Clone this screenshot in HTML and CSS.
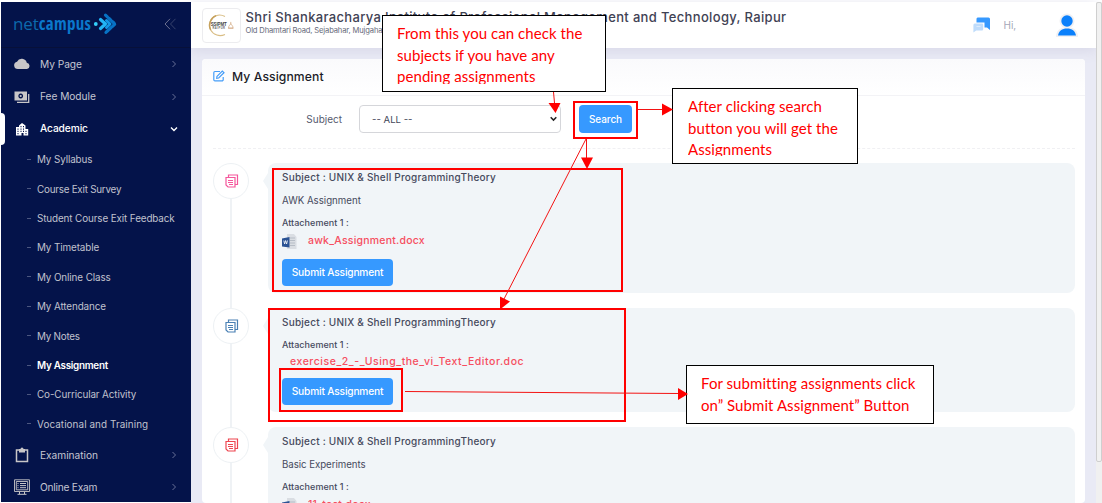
FILE: index.html
```html
<!DOCTYPE html>
<html lang="en">
<head>
<meta charset="utf-8">
<title>My Assignment</title>
<link rel="stylesheet" href="styles.css">
</head>
<body>
<div class="app">
  <nav class="sidebar">
    <div class="brand">
      <span class="brand-name">net<b>campus</b></span>
      <svg class="brand-mark" width="26" height="24" viewBox="0 0 26 24"><g fill="none" stroke-linecap="round" stroke-linejoin="round"><path d="M12.500 3.200L22 12l-9.500 8.800" stroke="#0872c4" stroke-width="3.200" stroke-dasharray="2.500 2"/><path d="M12.500 3.200L22 12l-9.500 8.800" stroke="#0872c4" stroke-width="2"/><path d="M7.500 7.500l5 4.500-5 4.500" stroke="#22b5f5" stroke-width="3.200"/><path d="M13.500 8.500L17 12l-3.500 3.500" stroke="#1297e6" stroke-width="3"/></g><circle cx="2.800" cy="12" r="1.900" fill="#35d0fa"/></svg>
      <svg class="collapse" width="13" height="12" viewBox="0 0 13 12" fill="none" stroke-width="1"><path d="M6 .8L1 6l5 5.200" stroke="#6c7090"/><path d="M11.500.8L6.500 6l5 5.200" stroke="#39446d"/></svg>
    </div>
    <a class="item"><svg class="ico" viewBox="0 0 16 16"><path fill="#c8c6c8" d="M3.800 13A3.700 3.700 0 0 1 3 5.700 5.300 5.300 0 0 1 12.800 6.700 3.200 3.200 0 0 1 13 13z"/></svg><span>My Page</span><svg class="chev" viewBox="0 0 8 8"><path d="M2.500 1l3 3-3 3"/></svg></a>
    <a class="item"><svg class="ico" viewBox="0 0 16 16"><path fill="#c8c6c8" fill-rule="evenodd" d="M.5 2.500h12.500v9H.5zM6.700 4.600a2.400 2.400 0 1 0 .01 0z"/><circle cx="6.700" cy="7" r="1.100" fill="#c8c6c8"/><path d="M3 13.300h11.700V5" fill="none" stroke="#c8c6c8" stroke-width="1.300"/></svg><span>Fee Module</span><svg class="chev" viewBox="0 0 8 8"><path d="M2.500 1l3 3-3 3"/></svg></a>
    <a class="item open"><svg class="ico" viewBox="0 0 16 16"><path fill="#fff" fill-rule="evenodd" d="M2 6h3V4.500L8 2l3.500 2.500V8h2.700v6.500H9.500V12h-2v2.500H2zM3.500 7.500v1.200h1V7.500zm0 2.300V11h1V9.800zm0 2.200v1.200h1V12zM6.500 5v1.200h1V5zm2.500 0v1.200h1V5zM6.500 7.500v1.200h1V7.500zm2.500 0v1.200h1V7.500zM6.500 9.800V11h1V9.800zm2.500 0V11h1V9.800zm2.500 0V11h1V9.800zm0 2.200v1.200h1V12z"/></svg><span>Academic</span><svg class="chev" viewBox="0 0 8 8"><path d="M1 2.500l3 3 3-3"/></svg></a>
    <a class="sub"><span>My Syllabus</span></a>
    <a class="sub tight"><span>Course Exit Survey</span></a>
    <a class="sub"><span>Student Course Exit Feedback</span></a>
    <a class="sub"><span>My Timetable</span></a>
    <a class="sub"><span>My Online Class</span></a>
    <a class="sub"><span>My Attendance</span></a>
    <a class="sub tight"><span>My Notes</span></a>
    <a class="sub current"><span>My Assignment</span></a>
    <a class="sub"><span>Co-Curricular Activity</span></a>
    <a class="sub loose"><span>Vocational and Training</span></a>
    <a class="item"><svg class="ico" viewBox="0 0 16 16"><path d="M2.500 3h11v11.500h-11z" fill="none" stroke="#c8c6c8" stroke-width="1.500"/><path d="M5 5.500V2h1.500a1.500 1.500 0 0 1 3 0H11v3.500z" fill="#c8c6c8"/></svg><span>Examination</span><svg class="chev" viewBox="0 0 8 8"><path d="M2.500 1l3 3-3 3"/></svg></a>
    <a class="item"><svg class="ico" viewBox="0 0 16 16" fill="none" stroke="#c8c6c8"><path d="M.5.800h15v11.700H.500zM2.300 2.500h11.400v8.300H2.300z" stroke-width=".9"/><path d="M3.500 4.500h1M6 4.500h6M3.500 6.600h1M6 6.600h6M3.500 8.700h1M6 8.700h6" stroke-width="1"/><path d="M5.500 13v2M10.500 13v2M3.500 15.300h9" stroke-width="1"/></svg><span class="online">Online Exam</span><svg class="chev" viewBox="0 0 8 8"><path d="M2.500 1l3 3-3 3"/></svg></a>
  </nav>

  <div class="main">
    <header class="topbar">
      <div class="crest"><svg width="28" height="28" viewBox="0 0 28 28"><path d="M19 4A12 12 0 0 0 9 3A11.500 11.500 0 0 0 3 19A12 12 0 0 0 19 24" fill="none" stroke="#d9bd84" stroke-width="1.200"/><path d="M9 3A11.500 11.500 0 0 0 3 19" fill="none" stroke="#c6a15c" stroke-width="1.600"/><text x="3" y="14.500" class="crest-name" textLength="18">SSIPMT</text><text x="5" y="18" class="crest-city" textLength="14">RAIPUR</text><path d="M25.500 10v2.500m-2.500 4.500c0-3 1.500-3 2.500-5 1 2 2.500 2 2.500 5zm-.5 0h6" fill="none" stroke="#d7b28d" stroke-width="1"/></svg></div>
      <div class="school">
        <div class="school-name">Shri Shankaracharya Institute of Professional Management and Technology, Raipur</div>
        <div class="school-addr">Old Dhamtari Road, Sejabahar, Mujgahan</div>
      </div>
      <svg class="chat" width="18" height="16" viewBox="0 0 18 16"><path d="M4.500.5h11a1.500 1.500 0 0 1 1.500 1.500v11l-3-2.500h-2.500V5.500H3.500v-4z" fill="#3699ff"/><path d="M2 6.500h7a1.200 1.200 0 0 1 1.200 1.200v4.600A1.200 1.200 0 0 1 9 13.500H3.200L.4 15.500V8A1.500 1.500 0 0 1 2 6.500z" fill="#bfdcfb"/><path d="M3.500 9.500h4" stroke="#dcecfd"/></svg>
      <span class="hi">Hi,</span>
      <svg class="user" width="24" height="25" viewBox="0 0 24 25"><circle cx="12" cy="8" r="7.500" fill="#f0f0f3"/><path d="M1 24c0-6 4-9.500 8-9.500h6c4 0 8 3.500 8 9.500z" fill="#f0f0f3"/><circle cx="12" cy="8" r="5.700" fill="#0b80fb"/><path d="M3 22.500c.8-4.500 4-7 9-7s8.200 2.500 9 7z" fill="#0b80fb"/></svg>
    </header>

    <section class="card">
      <div class="card-head">
        <svg width="12" height="12" viewBox="0 0 12 12" fill="none" stroke="#459df8" stroke-width="1.200"><path d="M7 1.500H2A1.200 1.200 0 0 0 .8 2.700v7A1.200 1.200 0 0 0 2 10.900h7a1.200 1.200 0 0 0 1.200-1.200V7"/><path d="M4 6.300L9.300 1l1.700 1.700-5.300 5.300L3.700 8.300z"/></svg>
        <h1>My Assignment</h1>
      </div>
      <div class="filter">
        <label>Subject</label>
        <div class="select"><span>-- ALL --</span><svg width="7" height="6" viewBox="0 0 7 6"><path d="M.7 1.200l2.800 2.900 2.800-2.900" fill="none" stroke="#222" stroke-width="1.500"/></svg></div>
        <button class="btn search">Search</button>
      </div>
      <div class="timeline">
        <div class="entry pink">
          <div class="dot"><svg viewBox="0 0 14 14"><path d="M3.500 3V1h9v9.500h-2M1 3.500h9v9.500H3L1 11zM3 6.500h5M3 8.500h5M4 10.500h4"/></svg></div>
          <div class="panel tall">
            <h2>Subject : UNIX &amp; Shell ProgrammingTheory</h2>
            <p>AWK Assignment</p>
            <h3>Attachement 1 :</h3>
            <div class="file withicon"><svg width="15" height="15" viewBox="0 0 15 15"><path d="M5 0h7l2.500 3v12H5z" fill="#dadee3"/><path d="M8 4h5M8 6.500h5M8 9h5M8 11.500h5" stroke="#b6bdc6"/><path d="M0 4.500L7.500 3v10.500L0 12.500z" fill="#2b5394"/><path d="M1.800 6.500l.8 3.500 1-3.500 1 3.500.9-3.500" fill="none" stroke="#fff" stroke-width=".8"/></svg><a>awk_Assignment.docx</a></div>
            <button class="btn">Submit Assignment</button>
          </div>
        </div>
        <div class="entry blue">
          <div class="dot"><svg viewBox="0 0 14 14"><path d="M3.500 3V1h9v9.500h-2M1 3.500h9v9.500H3L1 11zM3 6.500h5M3 8.500h5M4 10.500h4"/></svg></div>
          <div class="panel short">
            <h2>Subject : UNIX &amp; Shell ProgrammingTheory</h2>
            <h3>Attachement 1 :</h3>
            <div class="file"><a class="long">exercise_2_-_Using_the_vi_Text_Editor.doc</a></div>
            <button class="btn">Submit Assignment</button>
          </div>
        </div>
        <div class="entry red">
          <div class="dot"><svg viewBox="0 0 14 14"><path d="M3.500 3V1h9v9.500h-2M1 3.500h9v9.500H3L1 11zM3 6.500h5M3 8.500h5M4 10.500h4"/></svg></div>
          <div class="panel tall">
            <h2>Subject : UNIX &amp; Shell ProgrammingTheory</h2>
            <p class="basic">Basic Experiments</p>
            <h3>Attachement 1 :</h3>
            <div class="file withicon"><svg width="15" height="15" viewBox="0 0 15 15"><path d="M5 0h7l2.500 3v12H5z" fill="#dadee3"/><path d="M8 4h5M8 6.500h5" stroke="#b6bdc6"/><path d="M0 4.500L7.500 3v10.500L0 12.500z" fill="#2b5394"/></svg><a class="last">11_test.docx</a></div>
          </div>
        </div>
      </div>
    </section>
  </div>
  <div class="scroll"><div class="thumb"></div></div>
</div>

<div class="callout c-subjects"><div>From this you can check the<br>subjects if you have any<br>pending assignments</div></div>
<div class="callout c-search"><div>After clicking search<br>button you will get the<br>Assignments</div></div>
<div class="callout c-submit"><div>For submitting assignments click<br>on” Submit Assignment” Button</div></div>
<svg class="marks" width="1102" height="503" viewBox="0 0 1102 503">
  <g fill="none" stroke="#f00" stroke-width="2">
    <rect x="574" y="102" width="63" height="36"/>
    <rect x="273" y="169" width="349" height="122"/>
    <rect x="269" y="309" width="356" height="112"/>
    <rect x="280" y="369" width="122" height="42"/>
    <rect x="27" y="357" width="98" height="18"/>
  </g>
  <g fill="none" stroke="#f31313" stroke-width="1">
    <path d="M553.500 92l1 11M638 109.500h27M586.500 139v20M586 139l-82 160M405 391.500l273 2"/>
    <path d="M115.500 309v38" stroke="#d00c1c"/>
  </g>
  <g fill="#f00"><path d="M548.500 103h12l-5 10zM662 103.500v12l11-6zM581 157.500h12l-6 11.500zM500 296.500l10 5-10 8zM678 388v12l10-6zM109 346.500h12l-6 11z"/></g>
</svg>
</body>
</html>
```
FILE: styles.css
```css
* { box-sizing: border-box; }
body { margin: 0; width: 1102px; height: 503px; overflow: hidden; position: relative; background: #fff; font-family: Inter, "Open Sans", sans-serif; }
h1, h2, h3, p { margin: 0; font-weight: 500; }
.app { display: flex; height: 503px; padding: 2px 0 0 1px; }

.sidebar { width: 190px; height: 500px; background: #04134a; flex: none; white-space: nowrap; overflow: hidden; position: relative; z-index: 1; }
.brand { height: 46.200px; display: flex; align-items: center; padding: 0 14px 2px 12px; border-bottom: 1px solid #071039; }
.brand-name { font: 17px/20px "Open Sans", sans-serif; letter-spacing: -.1px; color: #0c69ad; width: 80px; flex: none; }
.brand-name b { font-weight: 700; font-stretch: 87%; letter-spacing: .3px; color: #0a78cc; }
.brand-mark { flex: none; }
.collapse { margin-left: auto; }
.item { height: 32.300px; display: flex; align-items: center; padding: 0 13px; font-size: 10.200px; color: #c5c6d2; letter-spacing: -.05px; }
.item span { padding-bottom: 1px; }
.item .online { letter-spacing: -.25px; }
.ico { width: 16px; height: 16px; margin-right: 10px; }
.chev { width: 8px; height: 8px; margin-left: auto; fill: none; stroke: #687097; stroke-width: 1; }
.item.open { color: #fff; font-weight: 500; position: relative; letter-spacing: -.1px; }
.item.open::before { content: ""; position: absolute; left: -1px; top: 0; width: 5px; height: 32px; border-radius: 0 4px 4px 0; background: #fff; }
.open .chev { stroke: #fff; stroke-width: 1.400; }
.sub { height: 29.400px; display: flex; align-items: center; padding: 0 0 1px 36px; font-size: 9.900px; color: #c0c2ce; letter-spacing: -.12px; }
.sub::before { content: ""; width: 4px; height: 1px; margin-left: -10px; margin-right: 6px; background: #4c5780; }
.sub.tight { letter-spacing: -.25px; }
.sub.loose { letter-spacing: .08px; }
.sub.current { color: #fff; font-weight: 600; letter-spacing: -.28px; }

.main { width: 905px; background: #e9eaf5; }
.topbar { height: 46px; background: #fff; display: flex; align-items: center; padding-left: 11px; white-space: nowrap; box-shadow: 0 3px 12px #d8d8e8; }
.crest { width: 39px; height: 35px; border: 1px solid #ececef; border-radius: 4px; display: flex; align-items: center; justify-content: center; margin-right: 4.500px; flex: none; }
.crest svg { overflow: visible; margin-right: 3px; width: 25px; height: 25px; }
.crest-name { font: bold 5px "Liberation Sans", sans-serif; fill: #444; }
.crest-city { font: bold 3px "Liberation Sans", sans-serif; fill: #666; }
.school { width: 727px; padding-bottom: 5px; flex: none; }
.school-name { font-size: 13px; line-height: 17px; color: #3f4254; font-weight: 500; letter-spacing: .34px; }
.school-addr { font-size: 7.600px; line-height: 10px; color: #676a7a; letter-spacing: -.15px; }
.chat { flex: none; margin-bottom: 1px; }
.hi { font-size: 10px; color: #a5a7b8; margin-left: 13px; width: 12px; }
.user { margin-left: 39px; flex: none; }

.card { margin: 11px 11px 0; height: 444px; background: #fff; border-radius: 4px; overflow: hidden; }
.card-head { height: 37px; border-bottom: 1px solid #f3f3f6; display: flex; align-items: center; padding: 0 11px 2px; gap: 7px; background: linear-gradient(#fafafc, #fff); }
.card-head h1 { font-size: 12.200px; color: #1c1d29; letter-spacing: .08px; }
.filter { height: 53px; margin: 0 10px 0 11px; padding: 9px 0 0; border-bottom: 1px dashed #f0f0f3; display: flex; }
.filter label { font-size: 10px; line-height: 28px; color: #565a6e; width: 129px; text-align: right; margin-right: 17px; }
.select { width: 202px; height: 28px; border: 1px solid #d5d6da; border-radius: 4px; display: flex; align-items: center; justify-content: space-between; padding: 0 3px 0 12px; font-size: 9.600px; color: #44475a; }
.btn { display: block; border: 0; border-radius: 4px; background: #3699ff; color: #fff; font: 500 10.200px Inter, sans-serif; letter-spacing: -.18px; width: 111px; height: 27px; padding: 0 0 1px; white-space: nowrap; }
.btn.search { width: 53px; height: 28px; margin-left: 18px; font-size: 10px; letter-spacing: -.1px; }
.timeline { margin: 14px 10px 0 11px; }
.entry { display: flex; align-items: flex-start; gap: 19px; background: linear-gradient(#eff2f5, #eff2f5) 17px 0 / 2px 100% no-repeat; padding-bottom: 15px; }
.dot { width: 36px; height: 36px; border-radius: 50%; background: #fff; border: 1.500px solid #edf1f4; display: flex; align-items: center; justify-content: center; flex: none; padding: 0 0 1px 1px; }
.dot svg { width: 14px; height: 14px; fill: none; stroke: currentColor; stroke-width: 1.200; }
.pink .dot { color: #f5569b; }
.blue .dot { color: #4a80b4; }
.red .dot { color: #ee4651; }
.panel { flex: 1; background: #f1f5f8; border-radius: 8px; padding: 3px 14px 0; position: relative; white-space: nowrap; color: #464a5d; }
.panel::before { content: ""; position: absolute; left: -5px; top: 10px; border: solid transparent; border-width: 8px 5px 8px 0; border-right-color: #f1f5f8; }
.tall { height: 130px; }
.short { height: 104px; }
.panel h2 { font-size: 10px; line-height: 22px; letter-spacing: .22px; }
.panel p { font-size: 9.700px; line-height: 22px; padding-top: 2px; font-weight: 400; }
.panel p.basic { letter-spacing: -.05px; }
.panel h3 { font-size: 9px; line-height: 22px; letter-spacing: .04px; }
.short h3 { padding-top: 1px; height: 22px; }
.file { height: 14px; line-height: 12px; margin-bottom: 9px; display: flex; align-items: center; padding: 0 0 0 8px; font-size: 10.500px; font-weight: 500; letter-spacing: .22px; color: #f64e60; }
.file .long { letter-spacing: .54px; }
.withicon { padding-left: 0; margin-bottom: 11px; gap: 11px; }

.scroll { width: 6px; background: #f0f0f0; }
.thumb { height: 460px; border: 1px solid #cfcfcf; border-radius: 2px; background: #f1f1f1; }

.callout { position: absolute; background: #fff; border: 1px solid #000; color: #f00; font: 15px/21.600px Lato, sans-serif; letter-spacing: .06px; white-space: nowrap; padding: 7px 14px; }
.callout div { overflow: hidden; height: 100%; }
.c-subjects { left: 382px; top: 15px; width: 224px; height: 77px; }
.c-search { left: 672px; top: 88px; width: 186px; height: 76px; padding-left: 15px; }
.c-submit { left: 686px; top: 365px; width: 248px; height: 59px; }
.marks { position: absolute; left: 0; top: 0; }
```
